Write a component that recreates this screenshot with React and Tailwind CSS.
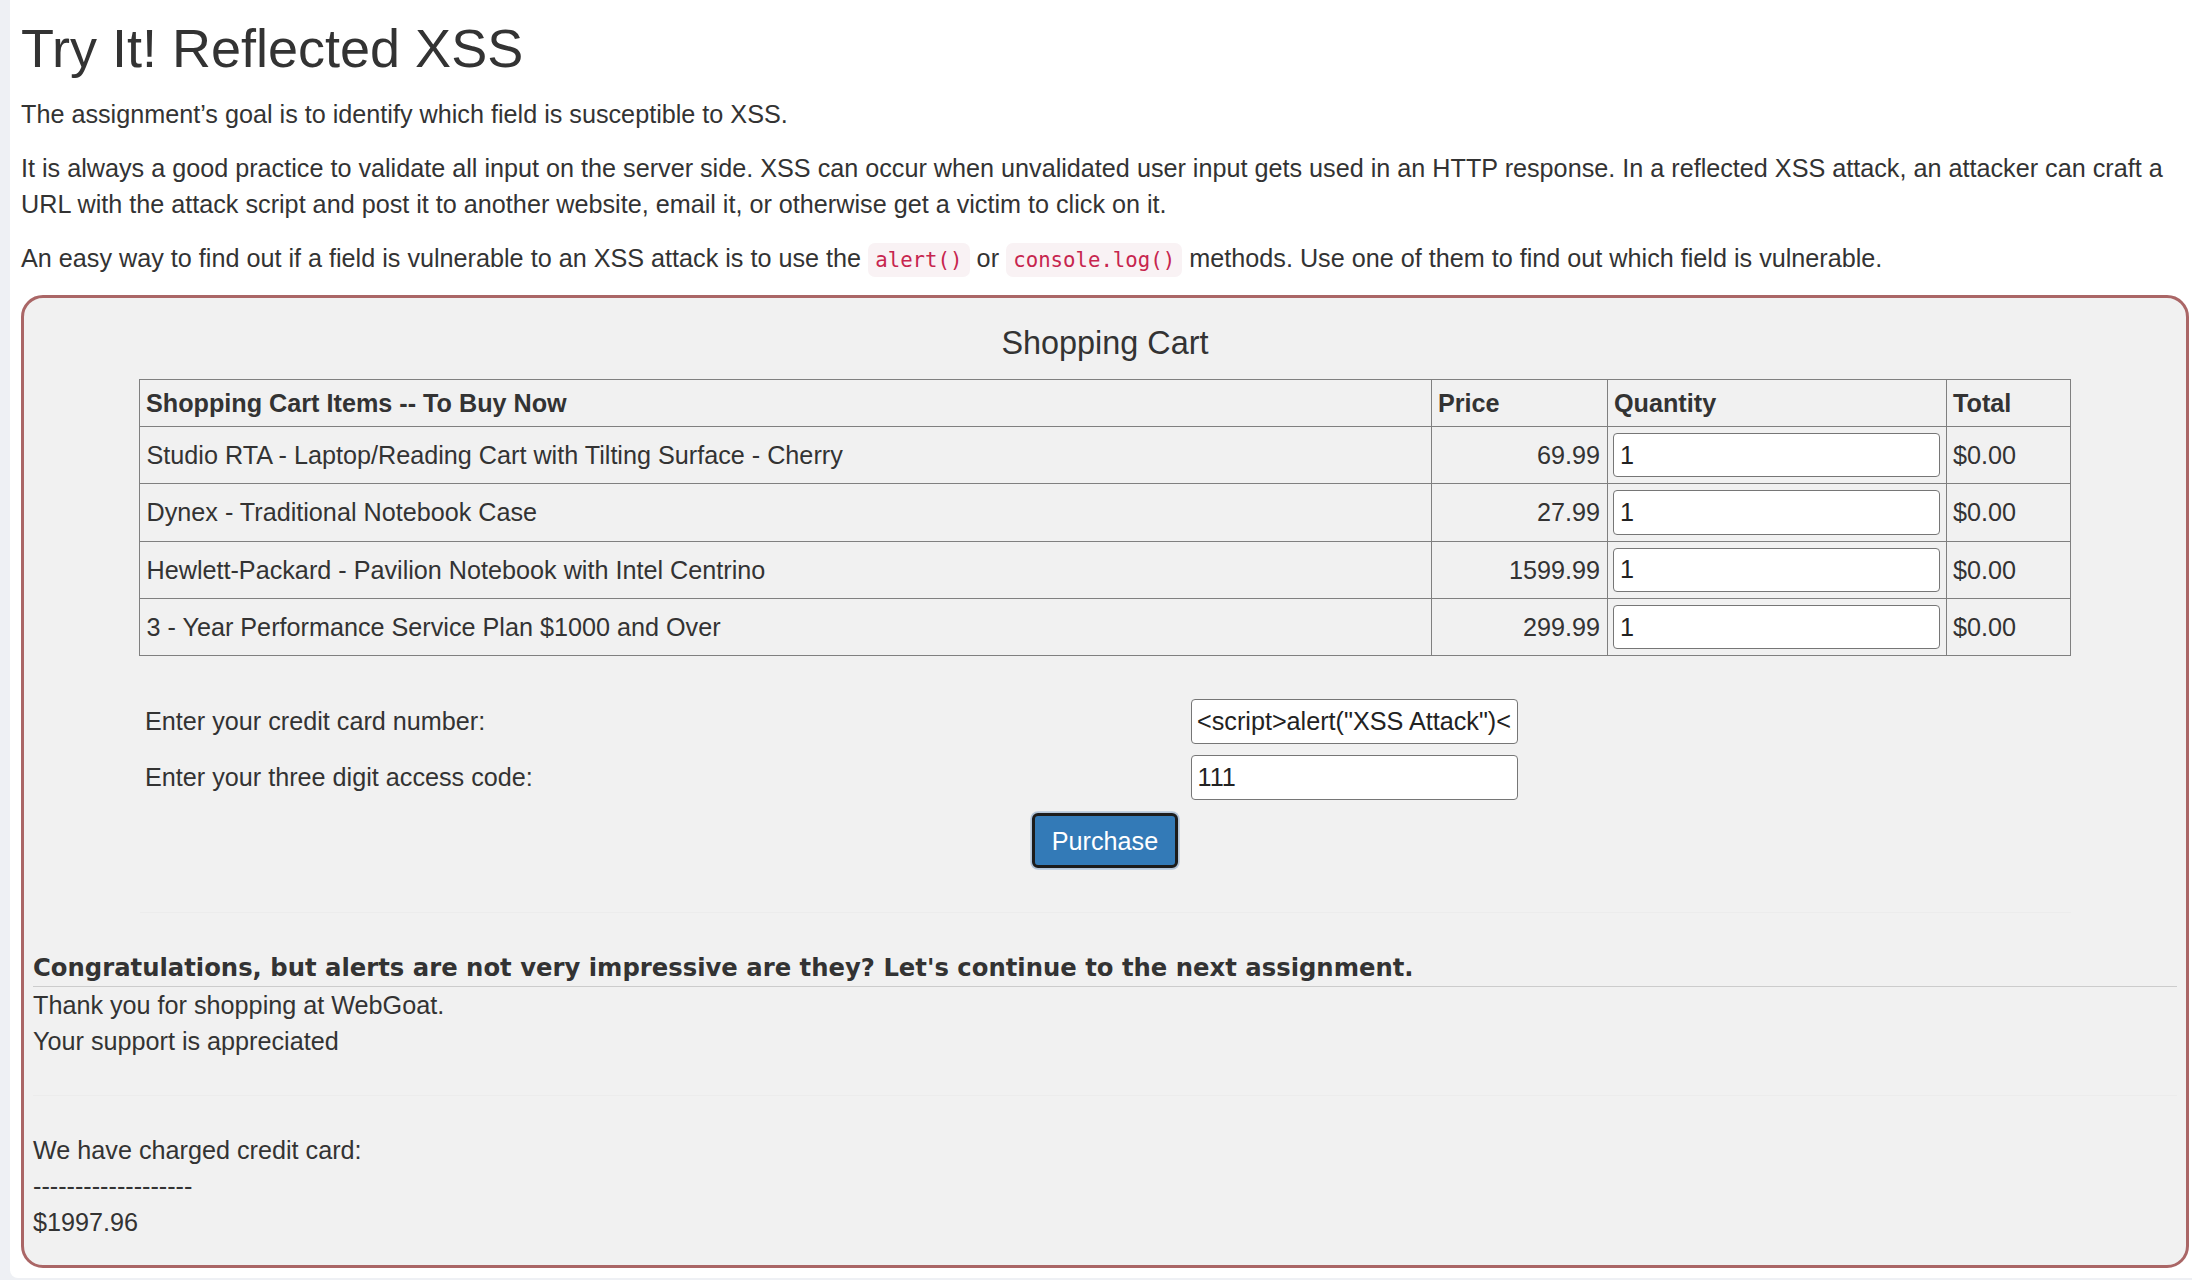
export default function App() {
  const items = [
    ["Studio RTA - Laptop/Reading Cart with Tilting Surface - Cherry", "69.99"],
    ["Dynex - Traditional Notebook Case", "27.99"],
    ["Hewlett-Packard - Pavilion Notebook with Intel Centrino", "1599.99"],
    ["3 - Year Performance Service Plan $1000 and Over", "299.99"],
  ];
  const codeCls =
    "inline-block px-[7.2px] py-[4px] rounded-[7px] bg-[#f9f2f4] text-[#c7254e] text-[20.7px] leading-[26px] font-['DejaVu_Sans_Mono',monospace] align-baseline";
  return (
    <div className="w-[2192px] h-[1280px] bg-[#eef0f4] overflow-hidden font-['Liberation_Sans',Arial,sans-serif] text-[#333]">
      <div className="ml-[10px] h-[1278px] bg-white rounded-bl-[8px] pl-[11px] pr-[3px] pt-[19px]">
        <h2 className="text-[54px] leading-[59.4px] font-normal mb-[18px]">Try It! Reflected XSS</h2>
        <p className="text-[25.2px] leading-[36px] mb-[18px]">
          The assignment’s goal is to identify which field is susceptible to XSS.
        </p>
        <p className="text-[25.2px] leading-[36px] mb-[18px]">
          It is always a good practice to validate all input on the server side. XSS can occur when unvalidated user input gets used in an HTTP response. In a reflected XSS attack, an attacker can craft a URL with the attack script and post it to another website, email it, or otherwise get a victim to click on it.
        </p>
        <p className="text-[25.2px] leading-[36px] mb-[18px]">
          An easy way to find out if a field is vulnerable to an XSS attack is to use the{" "}
          <code className={codeCls}>alert()</code> or{" "}
          <code className={codeCls}>console.log()</code> methods. Use one of them to find out which field is vulnerable.
        </p>

        <div className="border-[3px] border-[#aa6666] rounded-[22px] bg-[#f1f1f1] px-[9px] pt-[27px] pb-[25.3px] text-[25.2px] leading-[36px]">
          <div className="text-center text-[32.4px] leading-[36px] mb-[17.6px]">Shopping Cart</div>

          <table className="mx-auto w-[1931px] table-fixed border-collapse">
            <colgroup>
              <col className="w-[1292px]" />
              <col className="w-[176px]" />
              <col className="w-[339px]" />
              <col className="w-[124px]" />
            </colgroup>
            <thead>
              <tr>
                <th className="border border-[#808080] px-[6px] py-[5px] text-left font-bold">Shopping Cart Items -- To Buy Now</th>
                <th className="border border-[#808080] px-[6px] py-[5px] text-left font-bold">Price</th>
                <th className="border border-[#808080] px-[6px] py-[5px] text-left font-bold">Quantity</th>
                <th className="border border-[#808080] px-[6px] py-[5px] text-left font-bold">Total</th>
              </tr>
            </thead>
            <tbody>
              {items.map(([name, price]) => (
                <tr key={name}>
                  <td className="border border-[#808080] px-[6.5px] py-[6px] align-middle">{name}</td>
                  <td className="border border-[#808080] px-[7px] py-[6px] text-right align-middle">{price}</td>
                  <td className="border border-[#808080] pl-[4.5px] pr-[6px] py-[6px] align-middle">
                    <input
                      readOnly
                      value="1"
                      className="block w-[327px] h-[44.3px] bg-white border border-[#767676] rounded-[4px] px-[6.5px] text-[25.2px] text-[#222] outline-none"
                    />
                  </td>
                  <td className="border border-[#808080] px-[6px] py-[6px] align-middle">$0.00</td>
                </tr>
              ))}
            </tbody>
          </table>

          <div className="mx-auto w-[1931px] mt-[42.5px]">
            <div className="flex flex-col gap-[10.6px]">
              <div className="flex items-center h-[45.4px]">
                <div className="w-[1051px] shrink-0 pl-[5.5px]">Enter your credit card number:</div>
                <input
                  readOnly
                  value={'<script>alert("XSS Attack")</script>'}
                  className="w-[327px] h-[45.4px] bg-white border border-[#767676] rounded-[4px] px-[5.5px] text-[25.2px] text-[#222] outline-none"
                />
              </div>
              <div className="flex items-center h-[45.4px]">
                <div className="w-[1051px] shrink-0 pl-[5.5px]">Enter your three digit access code:</div>
                <input
                  readOnly
                  value="111"
                  className="w-[327px] h-[45.4px] bg-white border border-[#767676] rounded-[4px] px-[6px] text-[25.2px] text-[#222] outline-none"
                />
              </div>
            </div>
            <div className="flex justify-center mt-[13px]">
              <button className="w-[146px] h-[55px] border-[3px] border-[#1c1c1c] rounded-[6px] bg-[#337ab7] text-white text-[25.2px] leading-[36px] shadow-[0_0_0_1.7px_#b3c5d9]">
                Purchase
              </button>
            </div>
            <div className="mt-[44.3px] h-px bg-[#ececec]"></div>
          </div>

          <div className="mt-[36.7px] font-bold border-b border-[#cccccc] text-[24.3px] leading-[36px] font-['DejaVu_Sans',Verdana,sans-serif]">
            Congratulations, but alerts are not very impressive are they? Let's continue to the next assignment.
          </div>
          <div>
            Thank you for shopping at WebGoat.
            <br />
            Your support is appreciated
            <hr className="my-[36px] border-0 border-t border-[#ececec]" />
            <p>
              We have charged credit card:
              <br />
              -------------------
              <br />
              $1997.96
            </p>
          </div>
        </div>
      </div>
    </div>
  );
}
